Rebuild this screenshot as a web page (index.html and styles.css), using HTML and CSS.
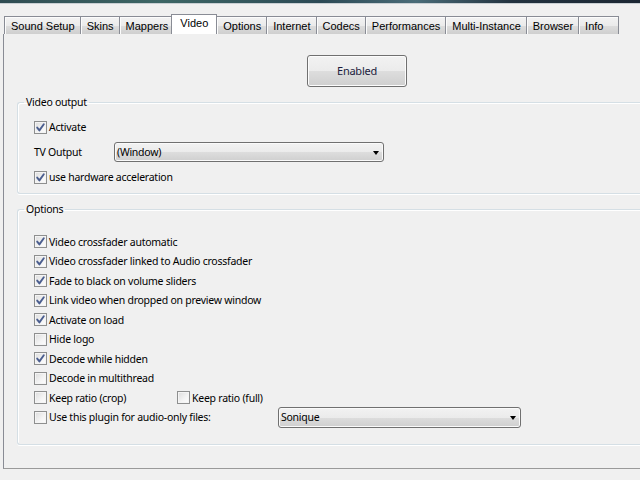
FILE: index.html
```html
<!DOCTYPE html>
<html>
<head>
<meta charset="utf-8">
<link rel="stylesheet" href="styles.css">
</head>
<body>
<div class="topbar"></div>
<div class="tabs">
  <div class="tab">Sound Setup</div>
  <div class="tab">Skins</div>
  <div class="tab">Mappers</div>
  <div class="tab sel">Video</div>
  <div class="tab">Options</div>
  <div class="tab">Internet</div>
  <div class="tab">Codecs</div>
  <div class="tab">Performances</div>
  <div class="tab">Multi-Instance</div>
  <div class="tab">Browser</div>
  <div class="tab info">Info</div>
</div>
<div class="panel">
  <div class="btnrow"><div class="btn">Enabled</div></div>
  <fieldset class="group g-video">
    <legend>Video output</legend>
    <div class="vrows">
      <div class="row"><span class="cb on"><svg viewBox="0 0 11 11" width="11" height="11"><path d="M2.2 5.6 L4.4 8.4 L8.8 2.2" fill="none" stroke="#4b5e8f" stroke-width="1.9" stroke-linecap="round" stroke-linejoin="round"/></svg></span><span class="txt">Activate</span></div>
      <div class="row"><span class="lbl">TV Output</span><div class="combo c-tv"><span class="ctext">(Window)</span><span class="arrow"></span></div></div>
      <div class="row"><span class="cb on"><svg viewBox="0 0 11 11" width="11" height="11"><path d="M2.2 5.6 L4.4 8.4 L8.8 2.2" fill="none" stroke="#4b5e8f" stroke-width="1.9" stroke-linecap="round" stroke-linejoin="round"/></svg></span><span class="txt">use hardware acceleration</span></div>
    </div>
  </fieldset>
  <fieldset class="group g-opts">
    <legend>Options</legend>
    <div class="orows">
      <div class="orow"><span class="cb on"><svg viewBox="0 0 11 11" width="11" height="11"><path d="M2.2 5.6 L4.4 8.4 L8.8 2.2" fill="none" stroke="#4b5e8f" stroke-width="1.9" stroke-linecap="round" stroke-linejoin="round"/></svg></span><span class="txt">Video crossfader automatic</span></div>
      <div class="orow"><span class="cb on"><svg viewBox="0 0 11 11" width="11" height="11"><path d="M2.2 5.6 L4.4 8.4 L8.8 2.2" fill="none" stroke="#4b5e8f" stroke-width="1.9" stroke-linecap="round" stroke-linejoin="round"/></svg></span><span class="txt">Video crossfader linked to Audio crossfader</span></div>
      <div class="orow"><span class="cb on"><svg viewBox="0 0 11 11" width="11" height="11"><path d="M2.2 5.6 L4.4 8.4 L8.8 2.2" fill="none" stroke="#4b5e8f" stroke-width="1.9" stroke-linecap="round" stroke-linejoin="round"/></svg></span><span class="txt">Fade to black on volume sliders</span></div>
      <div class="orow"><span class="cb on"><svg viewBox="0 0 11 11" width="11" height="11"><path d="M2.2 5.6 L4.4 8.4 L8.8 2.2" fill="none" stroke="#4b5e8f" stroke-width="1.9" stroke-linecap="round" stroke-linejoin="round"/></svg></span><span class="txt">Link video when dropped on preview window</span></div>
      <div class="orow"><span class="cb on"><svg viewBox="0 0 11 11" width="11" height="11"><path d="M2.2 5.6 L4.4 8.4 L8.8 2.2" fill="none" stroke="#4b5e8f" stroke-width="1.9" stroke-linecap="round" stroke-linejoin="round"/></svg></span><span class="txt">Activate on load</span></div>
      <div class="orow"><span class="cb"></span><span class="txt">Hide logo</span></div>
      <div class="orow"><span class="cb on"><svg viewBox="0 0 11 11" width="11" height="11"><path d="M2.2 5.6 L4.4 8.4 L8.8 2.2" fill="none" stroke="#4b5e8f" stroke-width="1.9" stroke-linecap="round" stroke-linejoin="round"/></svg></span><span class="txt">Decode while hidden</span></div>
      <div class="orow"><span class="cb"></span><span class="txt">Decode in multithread</span></div>
      <div class="orow">
        <div class="item w-crop"><span class="cb"></span><span class="txt">Keep ratio (crop)</span></div>
        <div class="item"><span class="cb"></span><span class="txt">Keep ratio (full)</span></div>
      </div>
      <div class="orow">
        <div class="item w-plug"><span class="cb"></span><span class="txt">Use this plugin for audio-only files:</span></div>
        <div class="combo c-son"><span class="ctext">Sonique</span><span class="arrow"></span></div>
      </div>
    </div>
  </fieldset>
</div>
</body>
</html>
```

FILE: styles.css
```css
html, body {
  margin: 0;
  padding: 0;
  overflow: hidden;
  width: 640px;
  height: 480px;
  background: #f0f0f0;
}

body {
  font-family: "Noto Sans", "Open Sans", sans-serif;
  font-size: 10.5px;
  letter-spacing: -0.25px;
  color: #000;
}

.topbar {
  height: 3px;
  background: linear-gradient(to right, #2f4c52 0%, #3d6665 25%, #2c4a55 50%, #4a6c78 65%, #22323f 80%, #1c2733 100%);
  border-bottom: 1px solid #c9cfd3;
}

.tabs {
  display: flex;
  align-items: flex-end;
  height: 20px;
  margin-top: 10px;
  padding-left: 4px;
  font-family: "Liberation Sans", "DejaVu Sans", sans-serif;
  font-size: 11px;
  letter-spacing: 0;
}

.tab {
  height: 17px;
  line-height: 18px;
  padding: 0 5px 0 6px;
  border: 1px solid #898c95;
  border-bottom: none;
  margin-right: -1px;
  background: linear-gradient(to bottom, #f3f3f3 0%, #ebebeb 50%, #dddddd 51%, #cfcfcf 100%);
  box-shadow: inset 1px 1px 0 #fcfcfc;
  white-space: nowrap;
}

.tab.sel {
  height: 19px;
  line-height: 16px;
  background: #fff;
  box-shadow: none;
  position: relative;
  z-index: 1;
  padding: 0 8px;
  margin: 0 -1px 0 -2px;
}

.tab.info {
  padding: 0 15px 0 6px;
}

.panel {
  width: 636px;
  height: 434px;
  margin-left: 3px;
  border-left: 1px solid #898c95;
  border-bottom: 1px solid #9a9a9a;
}

.btnrow {
  padding-top: 21px;
  padding-left: 303px;
}

.btn {
  width: 98px;
  height: 30px;
  line-height: 30px;
  text-align: center;
  font-size: 11px;
  border: 1px solid #707070;
  border-radius: 3px;
  background: linear-gradient(to bottom, #f2f2f2 0%, #ebebeb 50%, #dddddd 51%, #cfcfcf 100%);
  box-shadow: inset 0 0 0 1px #fcfcfc;
  color: #1b1b3c;
}

.group {
  box-sizing: border-box;
  margin: 0;
  margin-left: 13px;
  width: 623px;
  border: 1px solid #d5dfe5;
  border-right: none;
  border-radius: 3px 0 0 3px;
  box-shadow: inset 1px 1px 0 #fff, 0 1px 0 #fff;
  padding: 0 0 0 16px;
  min-width: 0;
}

.group legend {
  padding: 0 2px;
  margin-left: -10px;
  line-height: 14px;
  height: 14px;
}

.g-video {
  margin-top: 8px;
}

.vrows {
  display: flex;
  flex-direction: column;
  gap: 5px;
  padding-top: 8px;
  padding-bottom: 6px;
}

.row {
  display: flex;
  align-items: center;
  height: 20px;
}

.g-opts {
  margin-top: 8px;
}

.orows {
  display: flex;
  flex-direction: column;
  padding-top: 16px;
  padding-bottom: 17px;
}

.orow {
  display: flex;
  align-items: center;
  height: 19.5px;
}

.item {
  display: flex;
  align-items: center;
}

.w-crop { width: 143px; }
.w-plug { width: 244px; }

.cb {
  box-sizing: border-box;
  width: 13px;
  height: 13px;
  border: 1px solid #8e8f8f;
  background: linear-gradient(135deg, #dcdcdc 0%, #f4f4f4 60%, #fdfdfd 100%);
  box-shadow: inset 0 0 0 1px #f4f4f4;
  display: flex;
  align-items: center;
  justify-content: center;
  flex: none;
}

.cb svg { display: block; }

.txt {
  margin-left: 2px;
  white-space: nowrap;
}

.lbl {
  width: 80px;
  flex: none;
}

.combo {
  box-sizing: border-box;
  display: flex;
  align-items: center;
  justify-content: space-between;
  border: 1px solid #707070;
  border-radius: 3px;
  background: linear-gradient(to bottom, #f2f2f2 0%, #ebebeb 50%, #dddddd 51%, #cfcfcf 100%);
  box-shadow: inset 0 0 0 1px #fafafa;
  padding: 0 4px 0 2px;
}

.c-tv { width: 270px; height: 20px; }
.c-son { width: 243px; height: 21px; }

.arrow {
  width: 0;
  height: 0;
  border-left: 3.5px solid transparent;
  border-right: 3.5px solid transparent;
  border-top: 4px solid #000;
  margin-top: 1px;
}
```
